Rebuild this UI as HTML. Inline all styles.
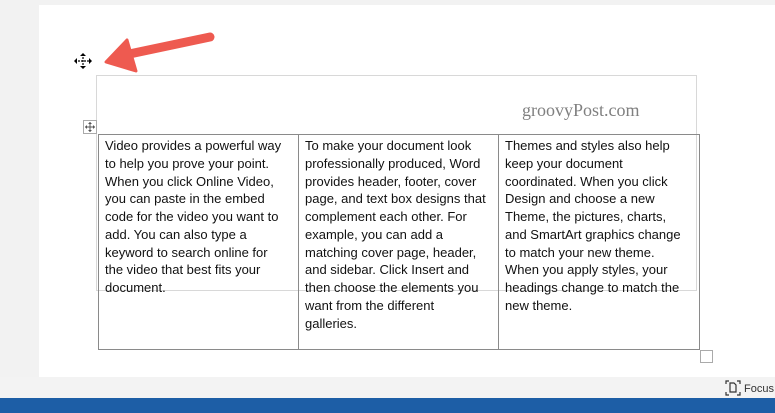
<!DOCTYPE html>
<html><head><meta charset="utf-8"><style>
body{margin:0;width:775px;height:413px;overflow:hidden;background:#fff;position:relative;font-family:"Liberation Sans",sans-serif}
.abs{position:absolute}
.cell{position:absolute;top:137px;font-size:13px;line-height:17.75px;color:#111;white-space:nowrap}
</style></head><body>
<div class="abs" style="left:0;top:0;width:775px;height:5px;background:#f2f2f2"></div>
<div class="abs" style="left:0;top:0;width:39px;height:377px;background:#f2f2f2"></div>
<div class="abs" style="left:39px;top:5px;width:736px;height:372px;background:#fff"></div>
<div class="abs" style="left:0;top:377px;width:775px;height:21px;background:#f3f3f3"></div>
<div class="abs" style="left:0;top:398px;width:775px;height:15px;background:#1d5ea6"></div>
<div class="abs" style="left:725px;top:380px;font-size:11px;color:#333;white-space:nowrap">
<svg width="16" height="16" viewBox="0 0 16 16" style="vertical-align:-4px"><path d="M1 4V1h3M12 1h3v3M15 12v3h-3M4 15H1v-3" fill="none" stroke="#333" stroke-width="1.2"/><path d="M5 3h4l2 2v7H5z" fill="none" stroke="#333" stroke-width="1.2"/></svg>&nbsp;Focus</div>
<div class="abs" style="left:96px;top:75px;width:601px;height:216px;border:1px solid #d8d8d8;box-sizing:border-box"></div>
<div class="abs" style="left:522px;top:100px;font-family:'Liberation Serif',serif;font-size:18px;color:#808080">groovyPost.com</div>
<div class="abs" style="left:98px;top:134px;width:602px;height:216px;border:1px solid #8a8a8a;box-sizing:border-box"></div>
<div class="abs" style="left:298px;top:134px;width:1px;height:216px;background:#8a8a8a"></div>
<div class="abs" style="left:498px;top:134px;width:1px;height:216px;background:#8a8a8a"></div>
<div class="abs" style="left:700px;top:350px;width:13px;height:13px;border:1px solid #aaa;box-sizing:border-box"></div>
<div class="abs" style="left:83px;top:120px;width:14px;height:14px;border:1px solid #aaa;box-sizing:border-box;background:#fff"></div>
<svg class="abs" style="left:84px;top:121px" width="12" height="12" viewBox="0 0 12 12"><path d="M6 1v10M1 6h10" stroke="#555" stroke-width="1"/><path d="M6 1l-2 2h4zM6 11l-2-2h4zM1 6l2-2v4zM11 6l-2-2v4z" fill="#555"/></svg>
<div class="cell" style="left:105px">Video provides a powerful way<br>to help you prove your point.<br>When you click Online Video,<br>you can paste in the embed<br>code for the video you want to<br>add. You can also type a<br>keyword to search online for<br>the video that best fits your<br>document.</div>
<div class="cell" style="left:305px">To make your document look<br>professionally produced, Word<br>provides header, footer, cover<br>page, and text box designs that<br>complement each other. For<br>example, you can add a<br>matching cover page, header,<br>and sidebar. Click Insert and<br>then choose the elements you<br>want from the different<br>galleries.</div>
<div class="cell" style="left:505px">Themes and styles also help<br>keep your document<br>coordinated. When you click<br>Design and choose a new<br>Theme, the pictures, charts,<br>and SmartArt graphics change<br>to match your new theme.<br>When you apply styles, your<br>headings change to match the<br>new theme.</div>
<svg class="abs" style="left:73px;top:52px" width="20" height="18" viewBox="0 0 20 18"><path d="M10 2v14M2 9h16" stroke="#000" stroke-width="1.2" stroke-dasharray="2 1"/><path d="M10 1l-3 3h6zM10 17l-3-3h6zM1 9l3-3v6zM19 9l-3-3v6z" fill="#000"/></svg>
<svg class="abs" style="left:0;top:0" width="260" height="100"><g fill="#ee5a50" stroke="#ee5a50" stroke-linejoin="round"><path d="M120 56L210 37" stroke-width="9" stroke-linecap="round"/><polygon points="106,62 127,40 136,71" stroke-width="3"/></g></svg>
</body></html>
